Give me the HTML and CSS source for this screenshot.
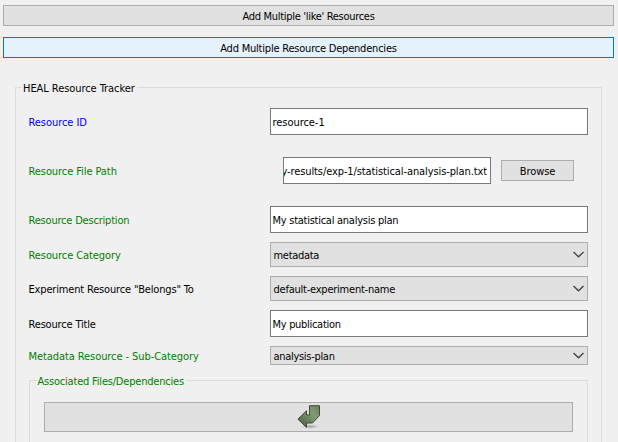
FILE: index.html
```html
<!DOCTYPE html>
<html lang="en">
<head>
<meta charset="utf-8">
<title>HEAL Resource Tracker</title>
<link rel="stylesheet" href="styles.css">
</head>
<body>
<main class="window">
  <button class="btn btn-wide"><span class="t-like">Add Multiple 'like' Resources</span></button>
  <button class="btn btn-wide btn-hot"><span class="t-deps">Add Multiple Resource Dependencies</span></button>
  <fieldset class="group">
    <legend class="t-heal">HEAL Resource Tracker</legend>
    <div class="form">
      <span class="label blue t-id">Resource ID</span>
      <div class="input"><span class="t-res">resource-1</span></div>
      <span class="label green t-path">Resource File Path</span>
      <div class="file">
        <div class="input input-path"><div class="clip"><span class="t-file">y-results/exp-1/statistical-analysis-plan.txt</span></div></div>
        <button class="btn browse"><span class="t-browse">Browse</span></button>
      </div>
      <span class="label green t-desc">Resource Description</span>
      <div class="input"><span class="t-plan">My statistical analysis plan</span></div>
      <span class="label green t-cat">Resource Category</span>
      <div class="combo"><span>metadata</span><svg class="chev" viewBox="0 0 11 7"><path d="M.5 1 5.5 5.8 10.5 1"/></svg></div>
      <span class="label t-exp">Experiment Resource "Belongs" To</span>
      <div class="combo"><span class="t-def">default-experiment-name</span><svg class="chev" viewBox="0 0 11 7"><path d="M.5 1 5.5 5.8 10.5 1"/></svg></div>
      <span class="label t-title">Resource Title</span>
      <div class="input"><span>My publication</span></div>
      <span class="label green t-sub">Metadata Resource - Sub-Category</span>
      <div class="combo"><span>analysis-plan</span><svg class="chev" viewBox="0 0 11 7"><path d="M.5 1 5.5 5.8 10.5 1"/></svg></div>
    </div>
    <fieldset class="group group-inner">
      <legend class="green t-assoc">Associated Files/Dependencies</legend>
      <button class="btn btn-arrow" aria-label="Expand">
        <svg class="arrow" viewBox="0 0 24 24">
          <defs>
            <linearGradient id="g" x1="1" y1="0" x2="0" y2="1"><stop offset="0" stop-color="#66805d"/><stop offset=".35" stop-color="#829c76"/><stop offset="1" stop-color="#42593a"/></linearGradient>
            <radialGradient id="s"><stop offset="0" stop-color="#777" stop-opacity=".6"/><stop offset="1" stop-color="#777" stop-opacity="0"/></radialGradient>
          </defs>
          <ellipse cx="13" cy="21.5" rx="9" ry="2.3" fill="url(#s)"/>
          <path d="M12.5.7H22.5V10.5L15.5 18H9.5V22.3L.9 14.2 9.5 5.8V10H12.5Z" fill="url(#g)" stroke="#3c4a38" stroke-linejoin="round"/>
        </svg>
      </button>
    </fieldset>
  </fieldset>
</main>
</body>
</html>
```

FILE: styles.css
```css
* { box-sizing: border-box; }
body {
  margin: 0;
  background: #f0f0f0;
  color: #000;
  font: 11px/13px "DejaVu Sans Condensed", "DejaVu Sans", sans-serif;
  font-stretch: condensed;
  letter-spacing: -0.3px;
  white-space: nowrap;
}
.window {
  display: flex;
  flex-direction: column;
  height: 442px;
  overflow: hidden;
  padding: 5px 4px 0 3px;
}
.btn {
  display: flex;
  flex: none;
  align-items: center;
  justify-content: center;
  margin: 0;
  padding: 0;
  height: 21px;
  border: 1px solid #adadad;
  background: #e1e1e1;
  color: inherit;
  font: inherit;
  letter-spacing: inherit;
}
.btn-wide { margin-bottom: 11px; }
.btn-hot { margin-bottom: 23px; border-color: #0078d7; background: #e5f1fb; }
.group {
  flex: 1;
  min-width: 0;
  min-height: 0;
  margin: 0 12px;
  padding: 14px 13px 0;
  border: 1px solid #dcdcdc;
  border-bottom: 0;
}
legend { padding: 0 2px 0 1px; margin-left: -7px; height: 13px; line-height: 15px; }
.group-inner { height: 68px; margin: 9px 0 0; padding: 15px 14px 0; }
.form {
  display: grid;
  grid-template-columns: 241px 318px;
  grid-template-rows: 27px 53px 27px 25px 25px 27px 19px;
  row-gap: 9px;
}
.label { align-self: center; margin-left: -0.5px; }
.label, .btn span, .input span, .combo span { padding-top: 2px; }
.blue { color: #0000ff; }
.green { color: #008000; }
.input {
  display: flex;
  align-items: center;
  height: 27px;
  padding-left: 1.5px;
  border: 1px solid #7a7a7a;
  background: #fff;
}
.file { display: flex; align-items: center; gap: 10px; padding-left: 13px; }
.input-path { width: 208px; padding: 0 3px 0 0; }
.clip { display: flex; justify-content: flex-end; width: 100%; overflow: hidden; }
.browse { width: 73px; }
.combo {
  display: flex;
  align-items: center;
  justify-content: space-between;
  padding: 0 3px 0 2.5px;
  border: 1px solid #adadad;
  background: #e1e1e1;
}
.chev { width: 11px; height: 7px; fill: none; stroke: #404040; stroke-width: 1.3; }
.group-inner legend { margin-left: -7.5px; }
.btn-arrow { width: 100%; height: 30px; }
.arrow { width: 24px; height: 24px; }

/* Tracking per caption */
.t-deps { letter-spacing: -0.21px; }
.t-heal { letter-spacing: -0.06px; }
.t-id, .t-res, .t-browse { letter-spacing: -0.05px; }
.t-path, .t-sub, .t-cat { letter-spacing: -0.08px; }
.t-file { letter-spacing: -0.1px; }
.t-desc, .t-assoc { letter-spacing: -0.2px; }
.t-exp, .t-title { letter-spacing: -0.17px; }
.t-plan { letter-spacing: -0.26px; }
.t-def { letter-spacing: -0.23px; }
```
